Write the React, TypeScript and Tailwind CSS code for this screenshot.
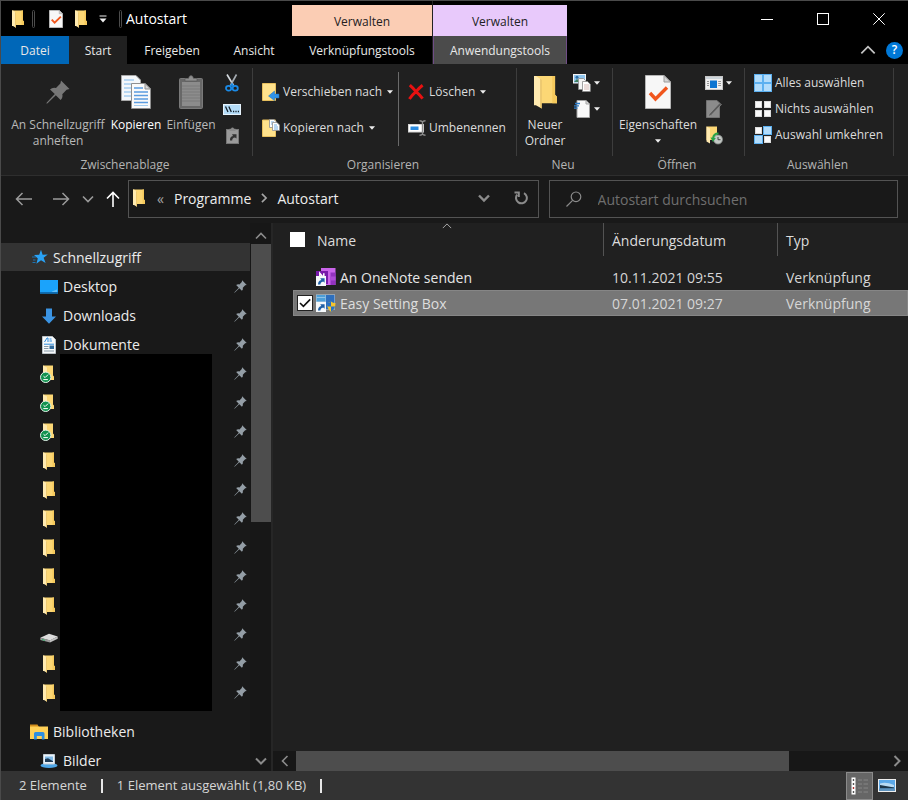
import React, { useState } from 'react';
import clsx from 'clsx';

type IconProps = { className?: string };

const FolderIcon: React.FC<IconProps> = ({ className = 'w-3 h-[18px]' }) => (
  <svg viewBox="0 0 12 18" className={className} preserveAspectRatio="none">
    <path d="M0 0.5H11V10.5L12 11.5V15H0Z" fill="#fcd775" />
    <path d="M9.5 0.5H11V10.5L12 11.5V15H9.5Z" fill="#f5c95c" />
    <path d="M0 0.5L1 0.5L4 2.5V17.7L1 16H0Z" fill="#ffeab0" />
    <path d="M4 2.5V17.7L3.3 17.3V2Z" fill="#e5bb58" />
  </svg>
);

const PinIcon: React.FC<IconProps> = ({ className }) => (
  <svg viewBox="0 0 24 24" className={className} fill="currentColor">
    <path d="M15 0.5L23.5 9L20.6 9.8L16.3 14.3Q17.2 17.6 14.6 20L9.8 15.2L1.6 23.2L0.4 23.7L0.8 22.4L8.8 14.1L4 9.4Q6.6 7.2 10 8.1L14.4 3.6Z" />
  </svg>
);

const CheckDocIcon: React.FC<IconProps> = ({ className }) => (
  <svg viewBox="0 0 26 34" className={className} preserveAspectRatio="none">
    <path d="M0.5 0.5H19L25.5 7V33.5H0.5Z" fill="#f7f7f7" stroke="#b5b5b5" />
    <path d="M19 0.5V7H25.5Z" fill="#d5d5d5" stroke="#9c9c9c" />
    <path d="M5 18L10.5 24L22 12.5" fill="none" stroke="#f0561d" strokeWidth="3.4" />
  </svg>
);

const CopyIcon: React.FC<IconProps> = ({ className }) => (
  <svg viewBox="0 0 30 34" className={className}>
    <path d="M0.5 0.5H15L19.5 5V25.5H0.5Z" fill="#f4f7fa" stroke="#a9a9a9" />
    <path d="M3 5H13M3 9H17M3 13H10M3 17H10M3 21H10" stroke="#a4cdf0" strokeWidth="1.6" />
    <path d="M10.5 8.5H24L29.5 14V33.5H10.5Z" fill="#fafafa" stroke="#8f8f8f" />
    <path d="M24 8.5V14H29.5Z" fill="#d8d8d8" stroke="#8f8f8f" />
    <path d="M13 13H22M13 17H27M13 20.5H27M13 24H27M13 27.5H27" stroke="#5b9ce0" strokeWidth="1.6" />
    <path d="M13 30.5H27" stroke="#a4cdf0" />
  </svg>
);

const PasteIcon: React.FC<IconProps> = ({ className }) => (
  <svg viewBox="0 0 24 34" className={className}>
    <rect x="0.5" y="3.5" width="23" height="30" rx="1" fill="#686868" stroke="#7a7a7a" />
    <rect x="3" y="7" width="18" height="24" fill="#8c8c8c" />
    <path d="M3 11H21M3 14H21M3 17H21M3 20H21M3 23H21M3 26H21" stroke="#7b7b7b" />
    <path d="M6 6V3.5H9.5Q10 0.5 12 0.5Q14 0.5 14.5 3.5H18V6Z" fill="#8e8e8e" stroke="#555" strokeWidth="0.6" />
  </svg>
);

const ScissorsIcon = () => (
  <svg viewBox="0 0 14 18" className="w-3.5 h-[18px]" fill="none">
    <path d="M2 0.5L8.6 11.5" stroke="#d5dbe0" strokeWidth="1.6" />
    <path d="M11.5 0.5L5.4 11.5" stroke="#a6adb3" strokeWidth="1.6" />
    <ellipse cx="3.6" cy="14.2" rx="2.6" ry="2.4" stroke="#1a8ae6" strokeWidth="1.8" />
    <ellipse cx="10.2" cy="14.2" rx="2.6" ry="2.4" stroke="#1a8ae6" strokeWidth="1.8" />
    <path d="M5 12.5L7 10L9 12.5" stroke="#1a8ae6" strokeWidth="1.6" />
  </svg>
);

const PathIcon = () => (
  <svg viewBox="0 0 18 11" className="w-[18px] h-[11px]">
    <rect x="0.5" y="0.5" width="17" height="10" fill="#b4dcf8" stroke="#e6f3fc" />
    <path d="M2.5 2.5L5 8M5.8 2.5L8.3 8" stroke="#14212b" strokeWidth="1.3" />
    <path d="M10 7.5H11.2M12.4 7.5H13.6M14.8 7.5H16" stroke="#14212b" strokeWidth="1.3" />
  </svg>
);

const PasteLinkIcon = () => (
  <svg viewBox="0 0 13 17" className="w-[13px] h-[17px]">
    <rect x="0.5" y="2.5" width="12" height="14" fill="#9a9a9a" stroke="#767676" />
    <path d="M3.5 4V1.8H5Q5.4 0.4 6.5 0.4Q7.6 0.4 8 1.8H9.5V4Z" fill="#8a8a8a" />
    <path d="M4 13.5Q3.6 9.8 7 9L6 7.2H10.5V11.6L9 10.4Q6 10.8 6.2 13.5Z" fill="#333" />
  </svg>
);

const MoveToIcon = () => (
  <svg viewBox="0 0 18 18" className="w-[18px] h-[18px]">
    <path d="M0.5 0.5H13.5V17.5H0.5Z" fill="#ffe28c" stroke="#e7bf5d" />
    <path d="M17 11H12.5V8L6.5 13L12.5 17.6V15H17Z" fill="#2f93e8" stroke="#1c6fb8" strokeWidth="0.5" />
  </svg>
);

const CopyToIcon = () => (
  <svg viewBox="0 0 18 18" className="w-[18px] h-[18px]">
    <path d="M0.5 1H13.5V17.5H0.5Z" fill="#ffe28c" stroke="#e7bf5d" />
    <path d="M7.5 0.5H12L14.5 3V8.5H7.5Z" fill="#fff" stroke="#8d8d8d" strokeWidth="0.8" />
    <path d="M9 3H12M9 5H11" stroke="#4b97dd" strokeWidth="0.8" />
    <path d="M10.5 3.5H15L17.5 6V11.5H10.5Z" fill="#fff" stroke="#8d8d8d" strokeWidth="0.8" />
    <path d="M12 6H15M12 8H16M12 10H16" stroke="#4b97dd" strokeWidth="0.8" />
  </svg>
);

const DeleteIcon = () => (
  <svg viewBox="0 0 16 16" className="w-4 h-4">
    <path d="M1.8 1.2Q5 4 8 7.6Q11 4 14.6 1.2M1.4 15Q4.5 10.5 8 7.6Q11.5 10.5 14.6 14.6" fill="none" stroke="#e81111" strokeWidth="3" />
  </svg>
);

const RenameIcon = () => (
  <svg viewBox="0 0 18 16" className="w-[18px] h-4">
    <rect x="0.5" y="4.5" width="15" height="7.5" fill="#fff" stroke="#d4d4d4" />
    <rect x="2.5" y="6.5" width="8" height="3.5" fill="#2b8be0" />
    <path d="M11.5 0.8Q14 0.8 14.5 2Q15 0.8 17.5 0.8M14.5 2V14M11.5 15.2Q14 15.2 14.5 14Q15 15.2 17.5 15.2" fill="none" stroke="#8d8d8d" strokeWidth="1.4" />
  </svg>
);

const NewItemIcon = () => (
  <svg viewBox="0 0 18 18" className="w-[18px] h-[18px]">
    <rect x="0.5" y="0.5" width="12" height="8.5" fill="#8fc5ee" stroke="#f3f3f3" />
    <path d="M1 8L4 5L7 8Z" fill="#3f7f5f" />
    <circle cx="4" cy="3.2" r="1.5" fill="#2c6da6" />
    <path d="M5.5 4.5H10.5L12.5 6.5V15.5H5.5Z" fill="#f4f4f4" stroke="#8b8b8b" strokeWidth="0.8" />
    <path d="M9.5 7.5H14.5L17.3 10.2V17.5H9.5Z" fill="#fff" stroke="#8b8b8b" strokeWidth="0.8" />
    <path d="M11 11H16M11 13H16M11 15H16" stroke="#c9a5a0" strokeWidth="0.8" />
  </svg>
);

const EasyAccessIcon = () => (
  <svg viewBox="0 0 16 18" className="w-4 h-[18px]">
    <path d="M3 0.5H12L15.5 4V17.5H3Z" fill="#fafafa" stroke="#a5a5a5" />
    <path d="M12 0.5V4H15.5" fill="#ddd" stroke="#a5a5a5" />
    <path d="M1 3.5H6M0 5.8H5M0 8.1H3.5" stroke="#2b7cc9" strokeWidth="1.3" />
  </svg>
);

const OpenWithIcon = () => (
  <svg viewBox="0 0 18 14" className="w-[18px] h-3.5">
    <rect x="0.5" y="0.5" width="17" height="13" fill="#f0f0f0" stroke="#c6c6c6" />
    <rect x="1" y="1" width="16" height="2" fill="#cdd5db" />
    <rect x="5" y="4.5" width="7" height="7.5" fill="#0b74d1" />
    <path d="M2 5.5H4M2 7.5H4M2 9.5H4M13.2 5.5H16M13.2 7.5H16M13.2 9.5H16" stroke="#8b8b8b" strokeWidth="0.9" />
  </svg>
);

const EditIcon = () => (
  <svg viewBox="0 0 16 18" className="w-4 h-[18px]">
    <path d="M0.5 0.5H11L13.5 3V17.5H0.5Z" fill="#8b8b8b" stroke="#727272" />
    <path d="M15.5 4.5L5 15.5L2.5 16.5L3.2 14L13.5 3Z" fill="#5b5b5b" stroke="#a5a5a5" strokeWidth="0.5" />
  </svg>
);

const HistoryIcon = () => (
  <svg viewBox="0 0 17 19" className="w-[17px] h-[19px]">
    <path d="M0.5 0.5H11V14H0.5Z" fill="#fcd775" />
    <path d="M0.5 0.5L4 2.5V17.5L0.5 15.5Z" fill="#ffeab0" />
    <circle cx="12" cy="13.5" r="4.5" fill="#c4c9c6" stroke="#868b88" strokeWidth="0.8" />
    <path d="M12 11V13.7H14.5" fill="none" stroke="#444" />
    <path d="M12.5 7.5Q7.5 7.5 7 12.5" fill="none" stroke="#29a347" strokeWidth="2" />
    <path d="M4.5 11.5L7 16L9.8 12Z" fill="#29a347" />
  </svg>
);

const SelectIcon: React.FC<{ filled: boolean[] }> = ({ filled }) => (
  <svg viewBox="0 0 18 18" className="w-[18px] h-[18px]">
    {filled.map((on, i) => (
      <rect
        key={i}
        x={(i % 2) * 9 + (on ? 0.5 : 1.5)}
        y={Math.floor(i / 2) * 9 + (on ? 0.5 : 1.5)}
        width={on ? 8 : 6}
        height={on ? 8 : 6}
        fill={on ? '#b2dcfb' : '#fafafa'}
        stroke={on ? '#5cb0f0' : '#dcdcdc'}
      />
    ))}
  </svg>
);

const Caret: React.FC<IconProps> = ({ className }) => (
  <svg viewBox="0 0 6 4" className={clsx('w-1.5 h-1 shrink-0', className)}>
    <path d="M0 0.3H6L3 3.7Z" fill="#eee" />
  </svg>
);

const Chevron: React.FC<{ dir: 'up' | 'down' | 'left' | 'right'; className?: string; weight?: number }> = ({ dir, className, weight = 1.6 }) => {
  const paths = {
    up: 'M1 8.5L6 3.5L11 8.5',
    down: 'M1 3.5L6 8.5L11 3.5',
    left: 'M8.5 1L3.5 6L8.5 11',
    right: 'M3.5 1L8.5 6L3.5 11'
  };
  return (
    <svg viewBox="0 0 12 12" className={clsx('shrink-0', className)} fill="none" stroke="currentColor" strokeWidth={weight}>
      <path d={paths[dir]} />
    </svg>
  );
};

const StarIcon = () => (
  <svg viewBox="0 0 16 16" className="w-4 h-4">
    <path d="M9 0.8L10.6 5.8L15.8 5.4L11.6 8.8L13.6 14L9 11.2L4.4 14.8L5.8 9.4L2 6L7.2 5.8Z" fill="#29a3f7" />
    <path d="M0 8H4M1 11H3.5M0.5 13.5H3.5" stroke="#1c74b5" />
  </svg>
);

const DesktopIcon = () => (
  <svg viewBox="0 0 18 14" className="w-[18px] h-3.5">
    <rect width="18" height="13.5" fill="#1ba3fb" />
    <path d="M0 12H18V13.5H0Z" fill="#0c6cb4" />
    <path d="M12 11.5L17 9.5V12H12Z" fill="#63c0fa" />
  </svg>
);

const DownloadIcon = () => (
  <svg viewBox="0 0 14 16" className="w-3.5 h-4">
    <path d="M4 0.5H10V8.5H14L7 15.8L0 8.5H4Z" fill="#3b94e3" />
  </svg>
);

const DocumentIcon = () => (
  <svg viewBox="0 0 14 18" className="w-3.5 h-[18px]">
    <path d="M0.5 0.5H10.5L13.5 3.5V17.5H0.5Z" fill="#f7f9fa" stroke="#bcc3c8" />
    <path d="M2.5 6L5 2H6V6M7.5 3H9.5M7.5 5H10" fill="none" stroke="#2c8bdd" />
    <path d="M2 8.2H12" stroke="#2c8bdd" />
    <rect x="7.5" y="9.5" width="4.5" height="3.5" fill="#326c9d" />
    <path d="M2 10.5H6.5M2 12.5H6.5M2 15H12" stroke="#879aa8" />
  </svg>
);

const SyncedFolderIcon = () => (
  <svg viewBox="0 0 18 18" className="w-[18px] h-[18px]">
    <path d="M3 0.5H13V10.5L14 11.5V15H3Z" fill="#fcd775" />
    <path d="M3 0.5L7 2.5V17L3 15.5Z" fill="#ffeab0" />
    <circle cx="5.7" cy="12.3" r="5.2" fill="#12924f" stroke="#e7f4ec" strokeWidth="1" />
    <path d="M3.5 11.2L5.1 12.6L8.1 9.6M3.3 14.6H7.9" fill="none" stroke="#fff" />
  </svg>
);

const DriveIcon = () => (
  <svg viewBox="0 -6 18 16" className="w-[18px] h-4">
    <path d="M0.3 4.8L9 0.8L17.7 3.5L10 7.5Z" fill="#dcdcdc" />
    <path d="M0.3 4.8L10 7.2V9.5L0.3 7Z" fill="#9b9b9b" />
    <path d="M10 7.2L17.7 3.5V5.8L10 9.5Z" fill="#c2c2c2" />
    <path d="M2 6.6L5 7.3" stroke="#2fae68" />
  </svg>
);

const LibraryIcon = () => (
  <svg viewBox="0 0 18 16" className="w-[18px] h-4">
    <path d="M0 0.5H7.5L9 3H0Z" fill="#d38f1c" />
    <path d="M0 2.5H18V15H0Z" fill="#ffd157" />
    <path d="M4 15.5V9.5Q4 8 5.5 8H13Q14.5 8 14.5 9.5V15.5H11.8V12H6.8V15.5Z" fill="#2e8fe0" />
  </svg>
);

const PicturesIcon = () => (
  <svg viewBox="0 0 18 14" className="w-[18px] h-3.5">
    <ellipse cx="9" cy="11.5" rx="8.5" ry="2.4" fill="#4ea7e8" />
    <path d="M3.5 0.5H14.5V10H3.5Z" fill="#e9f2f9" stroke="#c3ccd3" />
    <path d="M5 2.5H13V8H5Z" fill="#7fb9e6" />
    <path d="M5 5L8 4.2L13 7.2V8H5Z" fill="#1d3a55" />
  </svg>
);

const ShortcutArrow = () => (
  <>
    <rect x="0" y="8" width="10" height="10" fill="#f5f8fb" />
    <path d="M2 16.5Q2 12.8 5.4 12L4.2 10.2H8.6V14.8L7.2 13.4Q4.4 14 4.4 16.5Z" fill="#1e5fa5" />
  </>
);

const OneNoteIcon = () => (
  <svg viewBox="0 0 20 18" className="w-5 h-[18px]">
    <rect x="5" y="0" width="14.5" height="17" fill="#ca64ea" />
    <rect x="14.5" y="4.5" width="5" height="12.5" fill="#9332bf" />
    <rect x="14.5" y="8.5" width="5" height="4" fill="#ae4bd5" />
    <rect x="0" y="3" width="12" height="13" fill="#7719aa" />
    <path d="M3.8 9V5.2L7.8 10V5.2" fill="none" stroke="#fff" strokeWidth="1.5" />
    <ShortcutArrow />
  </svg>
);

const SettingBoxIcon = () => (
  <svg viewBox="0 0 20 18" className="w-5 h-[18px]">
    <rect x="0" y="0.5" width="19" height="15" fill="#b9cfe2" />
    <rect x="0.5" y="1" width="9" height="6.5" fill="#4d9fd8" />
    <path d="M0.5 3.5H9.5" stroke="#8fc3e8" />
    <rect x="10" y="1" width="8.5" height="14" fill="#2e6fbd" />
    <path d="M11 9Q13 9 15 7.5Q17 9 19.5 9Q19.5 15.5 15 17.7Q11 15.5 11 9Z" fill="#f6c52d" />
    <path d="M15 7.5V12.5H11.4Q11 11 11 9Q13 9 15 7.5ZM15 12.5H19Q18 16 15 17.7Z" fill="#2471c8" />
    <ShortcutArrow />
  </svg>
);

const RibbonGroup: React.FC<{ label: string; className?: string; children: React.ReactNode }> = ({ label, className, children }) => (
  <section className={clsx('flex flex-col shrink-0 pt-1', className)}>
    <div className="flex h-[88px] border-r border-[#3d3d3d]">{children}</div>
    <h2 className="pr-1 leading-[18px] text-center text-[#b4b4b4]">{label}</h2>
  </section>
);

const BigButton: React.FC<{ icon: React.ReactNode; lines: string[]; caret?: boolean; className?: string }> = ({ icon, lines, caret, className }) => (
  <button className={clsx('flex flex-col items-center pt-[7px] leading-4 whitespace-nowrap', className)}>
    <span className="flex h-[34px] items-center">{icon}</span>
    <span className="mt-2">{lines[0]}</span>
    {lines[1] && <span>{lines[1]}</span>}
    {caret && <Caret className="mt-1.5" />}
  </button>
);

const IconButton: React.FC<{ label: string; caret?: boolean; children: React.ReactNode }> = ({ label, caret, children }) => (
  <button aria-label={label} className="flex h-[26px] items-center gap-[3px]">
    <span className="flex w-[18px] justify-center">{children}</span>
    {caret && <Caret />}
  </button>
);

const RowButton: React.FC<{ icon: React.ReactNode; label: string; caret?: boolean; className?: string }> = ({ icon, label, caret, className }) => (
  <button className={clsx('flex items-center gap-[3px] whitespace-nowrap', className)}>
    {icon}
    <span>{label}</span>
    {caret && <Caret className="ml-0.5" />}
  </button>
);

const pinnedItems = [
  { icon: <DesktopIcon />, label: 'Desktop' },
  { icon: <DownloadIcon />, label: 'Downloads' },
  { icon: <DocumentIcon />, label: 'Dokumente' }
];

const hiddenItems = [
  'synced', 'synced', 'synced', 'folder', 'folder', 'folder', 'folder', 'folder', 'folder', 'drive', 'folder', 'folder'
];

const files = [
  { name: 'An OneNote senden', date: '10.11.2021 09:55', type: 'Verknüpfung', icon: <OneNoteIcon /> },
  { name: 'Easy Setting Box', date: '07.01.2021 09:27', type: 'Verknüpfung', icon: <SettingBoxIcon /> }
];

const NavItem: React.FC<{ icon: React.ReactNode; label?: string; pinned?: boolean; className?: string }> = ({ icon, label, pinned, className }) => (
  <li className={clsx('flex h-[29px] items-center pl-[38px] pr-[3px]', className)}>
    <span className="flex w-5 shrink-0 justify-center">{icon}</span>
    {label && <a href="#" className="ml-1">{label}</a>}
    {pinned && <PinIcon className="ml-auto w-[13px] h-[13px] text-[#949ea6]" />}
  </li>
);

const Header = () => (
  <header className="flex bg-black text-[12px]">
    <div className="flex w-[291px] shrink-0 flex-col">
      <div className="flex h-[35px] items-center pl-[11px]">
        <FolderIcon />
        <span className="ml-2 h-[18px] w-[3px] rounded border border-[#4c4c4c]" />
        <button aria-label="Eigenschaften" className="ml-3.5"><CheckDocIcon className="w-3.5 h-[18px]" /></button>
        <button aria-label="Neuer Ordner" className="ml-3"><FolderIcon /></button>
        <button aria-label="Symbolleiste anpassen" className="ml-3">
          <svg viewBox="0 0 8 8" className="w-2 h-2">
            <path d="M0.5 1H7.5" stroke="#eee" />
            <path d="M0.5 3.5H7.5L4 7.5Z" fill="#eee" />
          </svg>
        </button>
        <span className="ml-3 h-[18px] w-[3px] rounded border border-[#4c4c4c]" />
        <h1 className="ml-1 text-[14px] text-white">Autostart</h1>
      </div>
      <nav className="flex h-7 text-[#e8e8e8]">
        <button className="w-[68px] bg-[#0067b8] pt-px">Datei</button>
        <button className="w-[58px] bg-[#202020] pt-px">Start</button>
        <button className="w-[90px] pt-px">Freigeben</button>
        <button className="w-[74px] pt-px">Ansicht</button>
      </nav>
    </div>
    <div className="flex w-[141px] shrink-0 flex-col border-r border-[#222] pt-1">
      <div className="flex h-[31px] items-center justify-center bg-[#fbcdb4] pt-0.5 text-[#24201e]">Verwalten</div>
      <button className="h-7 pt-px text-[#e8e8e8]">Verknüpfungstools</button>
    </div>
    <div className="flex w-[134px] shrink-0 flex-col pt-1">
      <div className="flex h-[31px] items-center justify-center bg-[#e8c9fb] pt-0.5 text-[#221e24]">Verwalten</div>
      <button className="h-7 border-x border-[#6f4d86] bg-[#4b4b4b] pt-px text-[#e8e8e8]">Anwendungstools</button>
    </div>
    <div className="flex flex-1 flex-col">
      <div className="flex h-[35px] items-center justify-end gap-11 pr-[23px]">
        <button aria-label="Minimieren" className="text-white">
          <svg viewBox="0 0 12 12" className="w-3 h-3"><path d="M0 6.5H12" stroke="currentColor" /></svg>
        </button>
        <button aria-label="Maximieren" className="h-3 w-3 border border-white" />
        <button aria-label="Schließen" className="text-white">
          <svg viewBox="0 0 12 12" className="w-3 h-3"><path d="M0.3 0.3L11.7 11.7M11.7 0.3L0.3 11.7" stroke="currentColor" /></svg>
        </button>
      </div>
      <div className="flex h-7 items-center justify-end gap-2.5 pr-[5px]">
        <button aria-label="Menüband minimieren" className="text-[#c4c4c4]">
          <Chevron dir="up" weight={1.3} className="w-4 h-4" />
        </button>
        <button aria-label="Hilfe" className="flex h-[17px] w-[17px] items-center justify-center rounded-full bg-[#0078d7] font-semibold text-white">?</button>
      </div>
    </div>
  </header>
);

const Ribbon = () => (
  <div className="flex overflow-hidden border-b border-[#2e2e2e] bg-[#202020] pb-px text-[12px] text-[#dcdcdc]">
    <RibbonGroup label="Zwischenablage" className="w-[252px]">
      <BigButton className="ml-2 w-[98px] text-[#b9b9b9]" icon={<PinIcon className="w-6 h-6 text-[#777]" />} lines={['An Schnellzugriff', 'anheften']} />
      <BigButton className="w-[58px] text-white" icon={<CopyIcon className="w-[30px] h-[34px]" />} lines={['Kopieren']} />
      <BigButton className="w-[52px] text-[#b9b9b9]" icon={<PasteIcon className="w-6 h-[34px]" />} lines={['Einfügen']} />
      <div className="ml-1.5 flex flex-col pt-0.5">
        <IconButton label="Ausschneiden"><ScissorsIcon /></IconButton>
        <IconButton label="Pfad kopieren"><PathIcon /></IconButton>
        <IconButton label="Verknüpfung einfügen"><PasteLinkIcon /></IconButton>
      </div>
    </RibbonGroup>
    <RibbonGroup label="Organisieren" className="w-[264px]">
      <div className="mb-2.5 mt-1 flex w-[146px] flex-col border-r border-[#6a6a6a] pl-[9px]">
        <RowButton className="h-10" icon={<MoveToIcon />} label="Verschieben nach" caret />
        <RowButton className="h-8" icon={<CopyToIcon />} label="Kopieren nach" caret />
      </div>
      <div className="mb-2.5 mt-1 flex flex-col pl-[9px]">
        <RowButton className="h-10" icon={<span className="w-[18px]"><DeleteIcon /></span>} label="Löschen" caret />
        <RowButton className="h-8" icon={<RenameIcon />} label="Umbenennen" />
      </div>
    </RibbonGroup>
    <RibbonGroup label="Neu" className="w-24">
      <BigButton className="w-14" icon={<FolderIcon className="w-[23px] h-[34px]" />} lines={['Neuer', 'Ordner']} />
      <div className="flex flex-col pt-0.5">
        <IconButton label="Neues Element" caret><NewItemIcon /></IconButton>
        <IconButton label="Einfacher Zugriff" caret><EasyAccessIcon /></IconButton>
      </div>
    </RibbonGroup>
    <RibbonGroup label="Öffnen" className="w-[132px]">
      <BigButton className="w-[90px]" icon={<CheckDocIcon className="w-[26px] h-[34px]" />} lines={['Eigenschaften']} caret />
      <div className="ml-0.5 flex flex-col pt-0.5">
        <IconButton label="Öffnen" caret><OpenWithIcon /></IconButton>
        <IconButton label="Bearbeiten"><EditIcon /></IconButton>
        <IconButton label="Verlauf"><HistoryIcon /></IconButton>
      </div>
    </RibbonGroup>
    <RibbonGroup label="Auswählen" className="w-[149px]">
      <div className="flex flex-col pl-[9px] pt-0.5">
        <RowButton className="h-[26px]" icon={<SelectIcon filled={[true, true, true, true]} />} label="Alles auswählen" />
        <RowButton className="h-[26px]" icon={<SelectIcon filled={[false, false, false, false]} />} label="Nichts auswählen" />
        <RowButton className="h-[26px]" icon={<SelectIcon filled={[false, true, true, false]} />} label="Auswahl umkehren" />
      </div>
    </RibbonGroup>
  </div>
);

const AddressBar = () => (
  <div className="flex items-center pb-[5px] pr-2.5 pt-1 text-[14px]">
    <div className="flex w-[127px] shrink-0 items-center pl-3.5 text-[#9b9b9b]">
      <button aria-label="Zurück">
        <svg viewBox="0 0 18 14" className="w-[18px] h-3.5" fill="none" stroke="currentColor" strokeWidth="1.5"><path d="M17 7H1.5M7.5 1L1.5 7L7.5 13" /></svg>
      </button>
      <button aria-label="Vorwärts" className="ml-[19px]">
        <svg viewBox="0 0 18 14" className="w-[18px] h-3.5" fill="none" stroke="currentColor" strokeWidth="1.5"><path d="M1 7H16.5M10.5 1L16.5 7L10.5 13" /></svg>
      </button>
      <button aria-label="Verlauf" className="ml-3"><Chevron dir="down" className="w-3 h-3" /></button>
      <button aria-label="Nach oben" className="ml-3 text-white">
        <svg viewBox="0 0 14 16" className="w-3.5 h-4" fill="none" stroke="currentColor" strokeWidth="1.6"><path d="M7 16V1.5M1 7.5L7 1.5L13 7.5" /></svg>
      </button>
    </div>
    <div className="flex h-[38px] flex-[413] items-center border border-[#535353] pb-0.5 pl-1 pr-2.5 text-[#ececec]">
      <FolderIcon />
      <span className="ml-3 text-[#a5a5a5]">«</span>
      <button className="ml-2.5">Programme</button>
      <Chevron dir="right" weight={2} className="ml-2 w-2.5 h-2.5 text-[#a5a5a5]" />
      <button className="ml-2">Autostart</button>
      <button aria-label="Vorherige Speicherorte" className="ml-auto text-[#8b8b8b]">
        <Chevron dir="down" weight={2.4} className="w-3 h-3" />
      </button>
      <button aria-label="Aktualisieren" className="ml-6 text-[#8b8b8b]">
        <svg viewBox="0 0 14 14" className="w-3.5 h-3.5" fill="none" stroke="currentColor" strokeWidth="2">
          <path d="M10 2.2A5.4 5.4 0 1 1 3.2 3.6" />
          <path d="M0.5 1.5H4.8V6" />
        </svg>
      </button>
    </div>
    <label className="ml-2.5 flex h-[38px] flex-[347] items-center border border-[#535353] pl-4 text-[#8b8b8b]">
      <svg viewBox="0 0 16 16" className="w-4 h-4 shrink-0" fill="none" stroke="currentColor" strokeWidth="1.2">
        <circle cx="10" cy="5.8" r="4.8" />
        <path d="M6.6 9.4L0.5 15.5" />
      </svg>
      <input
        type="text"
        aria-label="Autostart durchsuchen"
        placeholder="Autostart durchsuchen"
        className="ml-4 min-w-0 flex-1 bg-transparent text-white outline-none placeholder:text-[#6f6f6f]"
      />
    </label>
  </div>
);

const Sidebar = () => (
  <aside className="flex w-[270px] shrink-0">
    <ul className="flex w-[249px] flex-col pt-5 text-[14px] text-[#ececec]">
      <li className="mb-px flex h-7 items-center bg-[#333] pl-[31px]">
        <StarIcon />
        <a href="#" className="ml-[5px]">Schnellzugriff</a>
      </li>
      {pinnedItems.map(item => (
        <NavItem key={item.label} icon={item.icon} label={item.label} pinned />
      ))}
      <li className="relative">
        <ul>
          {hiddenItems.map((kind, i) => (
            <NavItem
              key={i}
              pinned
              icon={kind === 'synced' ? <SyncedFolderIcon /> : kind === 'drive' ? <DriveIcon /> : <FolderIcon />}
            />
          ))}
        </ul>
        <div className="absolute -bottom-1 -top-[5px] left-[59px] w-[152px] bg-black" />
      </li>
      <li className="mt-2.5 flex h-[29px] items-center pl-[29px]">
        <LibraryIcon />
        <a href="#" className="ml-[5px]">Bibliotheken</a>
      </li>
      <NavItem icon={<PicturesIcon />} label="Bilder" className="-mb-2" />
    </ul>
    <div className="flex flex-1 flex-col items-center bg-[#171717] text-[#8b8b8b]">
      <button aria-label="Nach oben scrollen" className="flex h-[21px] items-center pt-1"><Chevron dir="up" className="w-3 h-3" /></button>
      <div className="w-5 flex-[278] bg-[#4d4d4d]" />
      <div className="flex-[228]" />
      <button aria-label="Nach unten scrollen" className="flex h-[21px] items-center"><Chevron dir="down" weight={2} className="w-3 h-3" /></button>
    </div>
  </aside>
);

const FileList = () => {
  const [selected, setSelected] = useState('Easy Setting Box');

  return (
    <main className="flex min-w-0 flex-1 flex-col border-l-2 border-[#262626] bg-[#202020]">
      <div className="flex-1 pl-5">
        <table className="w-full table-fixed border-collapse text-left text-[14px]">
          <thead>
            <tr className="text-[#dcdcdc]">
              <th className="p-0 pb-2 font-normal">
                <div className="relative -ml-1 flex h-[33px] items-center border-r border-[#535353] pl-px">
                  <input type="checkbox" aria-label="Alle auswählen" className="h-[15px] w-[15px] appearance-none bg-white" />
                  <span className="ml-3 pt-0.5">Name</span>
                  <Chevron dir="up" weight={1.2} className="absolute left-[153px] -top-0.5 w-2.5 h-2.5 text-[#a5a5a5]" />
                </div>
              </th>
              <th className="w-[174px] p-0 pb-2 font-normal">
                <div className="flex h-[33px] items-center border-r border-[#535353] pl-2 pt-0.5">Änderungsdatum</div>
              </th>
              <th className="w-[130px] p-0 pb-2 font-normal">
                <div className="flex h-[33px] items-center pl-2 pt-0.5">Typ</div>
              </th>
            </tr>
          </thead>
          <tbody>
            {files.map(file => {
              const isSelected = file.name === selected;
              return (
                <tr
                  key={file.name}
                  onClick={() => setSelected(file.name)}
                  className={clsx('h-[26px]', isSelected ? 'bg-[#777] text-[#dedede] outline outline-1 -outline-offset-1 outline-[#868686]' : 'text-[#e6e6e6]')}
                >
                  <td className="p-0">
                    <div className="flex items-center pl-1">
                      <span className="relative mr-[3px] flex h-4 w-4">
                        {isSelected && (
                          <>
                            <input type="checkbox" aria-label={file.name} checked readOnly className="h-4 w-4 appearance-none border border-[#222] bg-white" />
                            <svg viewBox="0 0 16 16" className="pointer-events-none absolute inset-0" fill="none" stroke="#111" strokeWidth="1.6">
                              <path d="M3 8L6.4 11.4L13.2 4.4" />
                            </svg>
                          </>
                        )}
                      </span>
                      {file.icon}
                      <span className="ml-1">{file.name}</span>
                    </div>
                  </td>
                  <td className="p-0 pl-2 text-[#d6d6d6]">{file.date}</td>
                  <td className="p-0 pl-2 text-[#d6d6d6]">{file.type}</td>
                </tr>
              );
            })}
          </tbody>
        </table>
      </div>
      <div className="flex h-5 bg-[#171717] text-[#8b8b8b]">
        <button aria-label="Nach links scrollen" className="flex w-[23px] items-center justify-center"><Chevron dir="left" className="w-3 h-3" /></button>
        <div className="flex-[493] bg-[#4d4d4d]" />
        <div className="flex-[96]" />
        <button aria-label="Nach rechts scrollen" className="flex w-[23px] items-center justify-center"><Chevron dir="right" weight={2} className="w-3 h-3" /></button>
      </div>
    </main>
  );
};

const StatusBar = () => (
  <footer className="z-10 flex h-[29px] items-center bg-[#333] pl-[18px] pr-3 text-[13px] text-[#d6d6d6]">
    <span>2 Elemente</span>
    <span className="ml-3.5 h-3.5 w-0.5 bg-[#e8e8e8]" />
    <span className="ml-3.5">1 Element ausgewählt (1,80 KB)</span>
    <span className="ml-3.5 h-3.5 w-0.5 bg-[#e8e8e8]" />
    <button aria-label="Details" className="ml-auto flex h-7 w-[27px] items-center justify-center border border-[#8b8b8b] bg-[#666]">
      <svg viewBox="0 0 18 18" className="w-[18px] h-[18px]">
        <rect x="0.5" y="0.5" width="4" height="17" fill="#fff" />
        <path d="M2.5 2V4M2.5 6V8" stroke="#555" strokeWidth="1.4" />
        <path d="M2.5 10V12" stroke="#b03030" strokeWidth="1.4" />
        <path d="M2.5 14V16" stroke="#555" strokeWidth="1.4" />
        <path d="M7 3H11M12.5 3H17M7 7H11M12.5 7H17M7 11H11M12.5 11H17M7 15H11M12.5 15H17" stroke="#858585" />
      </svg>
    </button>
    <button aria-label="Große Symbole" className="ml-[5px]">
      <svg viewBox="0 0 18 13" className="w-[18px] h-[13px]">
        <rect x="0.5" y="0.5" width="17" height="12" fill="#5ba8e8" stroke="#eee" />
        <path d="M2 4.5Q8 2.5 16 6V8H2Z" fill="#b8daf3" />
        <path d="M2 6L9 7.2L16 8.5V9.5H2Z" fill="#1d3547" />
        <path d="M1 9.5H17V12H1Z" fill="#5f93bd" />
      </svg>
    </button>
  </footer>
);

export default function App() {
  return (
    <div className="flex min-h-screen flex-col border-l border-t border-[#4a4a4a] bg-[#191919] font-['Open_Sans','Noto_Sans',sans-serif]">
      <Header />
      <Ribbon />
      <AddressBar />
      <div className="flex flex-1">
        <Sidebar />
        <FileList />
      </div>
      <StatusBar />
    </div>
  );
}
